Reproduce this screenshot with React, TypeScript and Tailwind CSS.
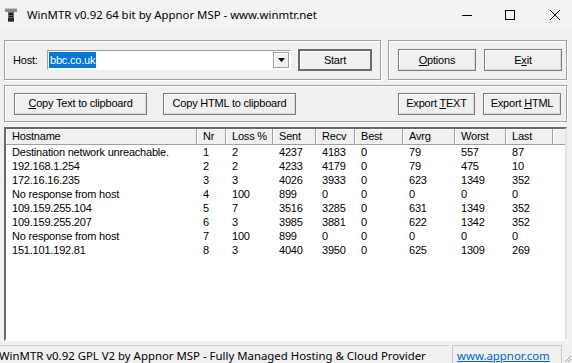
import React from 'react';

const dlg = "font-['Liberation_Sans',Arial,sans-serif] text-[11px] tracking-[-0.2px] text-black";
const ui = "font-['Noto_Sans',sans-serif] text-black";

const columns = [
  { name: 'Hostname', w: 'w-[191px]' },
  { name: 'Nr', w: 'w-[29px]' },
  { name: 'Loss %', w: 'w-[47px]' },
  { name: 'Sent', w: 'w-[43px]' },
  { name: 'Recv', w: 'w-[39px]' },
  { name: 'Best', w: 'w-[48px]' },
  { name: 'Avrg', w: 'w-[52px]' },
  { name: 'Worst', w: 'w-[51px]' },
  { name: 'Last', w: 'w-[47px]' },
];

const rows = [
  ['Destination network unreachable.', '1', '2', '4237', '4183', '0', '79', '557', '87'],
  ['192.168.1.254', '2', '2', '4233', '4179', '0', '79', '475', '10'],
  ['172.16.16.235', '3', '3', '4026', '3933', '0', '623', '1349', '352'],
  ['No response from host', '4', '100', '899', '0', '0', '0', '0', '0'],
  ['109.159.255.104', '5', '7', '3516', '3285', '0', '631', '1349', '352'],
  ['109.159.255.207', '6', '3', '3985', '3881', '0', '622', '1342', '352'],
  ['No response from host', '7', '100', '899', '0', '0', '0', '0', '0'],
  ['151.101.192.81', '8', '3', '4040', '3950', '0', '625', '1309', '269'],
];

function Btn({ children, className = '', isDefault = false }: { children: React.ReactNode; className?: string; isDefault?: boolean }) {
  return (
    <div
      className={
        'h-[22px] flex items-center justify-center bg-[#f0f0f0] ' +
        (isDefault
          ? 'border-2 border-[#6a6a6a] shadow-[inset_1px_1px_0_#fff]'
          : 'border border-[#7a7a7a] shadow-[inset_1px_1px_0_#fff,inset_-1px_-1px_0_#d8d8d8]') +
        ' ' + className
      }
    >
      <span className="whitespace-pre">{children}</span>
    </div>
  );
}

function Group({ children, className = '' }: { children: React.ReactNode; className?: string }) {
  return (
    <div className={'border border-[#a0a0a0] shadow-[inset_1px_1px_0_#fff,1px_1px_0_#fff] flex items-center ' + className}>
      {children}
    </div>
  );
}

function AppIcon() {
  return (
    <svg width="12" height="14" viewBox="0 0 12 14">
      <rect x="0" y="0" width="12" height="4" fill="#8a8a8a" />
      <rect x="0" y="0" width="12" height="1" fill="#c8c8c8" />
      <rect x="3" y="4" width="6" height="10" fill="#6a6a6a" />
      <rect x="4" y="5" width="4" height="2" fill="#1a1a1a" />
      <rect x="4" y="8" width="4" height="1" fill="#1a1a1a" />
      <rect x="3" y="10" width="6" height="3" fill="#2a2a2a" />
    </svg>
  );
}

export default function App() {
  return (
    <div className="w-[572px] h-[363px] bg-[#f0f0f0] flex flex-col overflow-hidden">
      {/* Title bar */}
      <div className={'h-[30px] flex items-center bg-[#f3f3f3] shrink-0 ' + ui}>
        <div className="ml-[5px] mt-[-1px]"><AppIcon /></div>
        <span className="ml-[10px] text-[11.4px] leading-none">WinMTR v0.92 64 bit by Appnor MSP - www.winmtr.net</span>
        <div className="ml-auto flex items-center mr-[12px]">
          <svg width="10" height="10" viewBox="0 0 10 10" className="mr-[33px]">
            <line x1="0" y1="5.5" x2="10" y2="5.5" stroke="#000" strokeWidth="1" />
          </svg>
          <svg width="10" height="10" viewBox="0 0 10 10" className="mr-[35px]">
            <rect x="0.5" y="0.5" width="9" height="9" fill="none" stroke="#000" strokeWidth="1" />
          </svg>
          <svg width="10" height="10" viewBox="0 0 10 10">
            <path d="M0 0 L10 10 M10 0 L0 10" stroke="#000" strokeWidth="1" />
          </svg>
        </div>
      </div>

      <div className={'flex flex-col px-[4px] ' + dlg}>
        {/* Row 1 */}
        <div className="flex mt-[10px] gap-[7px]">
          <Group className="w-[377px] h-[40px]">
            <span className="ml-[8px] w-[34px]">Host:</span>
            <div className="w-[244px] h-[20px] bg-white border border-t-[#a0a0a0] border-l-[#a0a0a0] border-b-white border-r-white flex items-center pl-[1px] pr-[1px]">
              <span className="bg-[#0078d7] text-white px-[1px] h-[16px] leading-[16px]">bbc.co.uk</span>
              <div className="ml-auto w-[16px] h-[16px] bg-[#f0f0f0] border border-[#a0a0a0] shadow-[inset_1px_1px_0_#fff] flex items-center justify-center">
                <svg width="7" height="4" viewBox="0 0 7 4"><path d="M0 0 H7 L3.5 4 Z" fill="#000" /></svg>
              </div>
            </div>
            <Btn isDefault className="ml-[7px] w-[74px]">Start</Btn>
          </Group>
          <Group className="w-[179px] h-[40px]">
            <Btn className="ml-[9px] w-[78px]"><span className="underline">O</span>ptions</Btn>
            <Btn className="ml-[8px] w-[78px]">E<span className="underline">x</span>it</Btn>
          </Group>
        </div>

        {/* Row 2 */}
        <Group className="mt-[5px] w-[563px] h-[37px]">
          <Btn className="ml-[9px] w-[133px]"><span className="underline">C</span>opy Text to clipboard</Btn>
          <Btn className="ml-[16px] w-[133px]">Copy HTML to clipboard</Btn>
          <Btn className="ml-auto w-[77px]">Export <span className="underline">T</span>EXT</Btn>
          <Btn className="ml-[8px] mr-[5px] w-[78px]">Export <span className="underline">H</span>TML</Btn>
        </Group>

        {/* List */}
        <div className="mt-[5px] w-[563px] h-[214px] border-2 border-t-[#696969] border-l-[#696969] border-b-white border-r-[#e3e3e3] bg-white flex flex-col">
          <div className="flex h-[16px] bg-[#f0f0f0] shrink-0">
            {columns.map(c => (
              <div key={c.name} className={c.w + ' h-full border-r border-b border-[#a0a0a0] shadow-[inset_1px_1px_0_#fff] pl-[6px] flex items-center'}>
                {c.name}
              </div>
            ))}
            <div className="flex-1 h-full border-b border-[#a0a0a0] shadow-[inset_1px_1px_0_#fff]" />
          </div>
          {rows.map((r, i) => (
            <div key={i} className="flex h-[14px] items-center">
              {r.map((v, j) => (
                <div key={j} className={columns[j].w + ' pl-[6px] whitespace-nowrap leading-[14px]'}>{v}</div>
              ))}
            </div>
          ))}
        </div>
      </div>

      {/* Status bar */}
      <div className={'mt-auto h-[18px] flex items-center ' + ui}>
        <div className="w-[449px] h-full border-t border-[#d0d0d0] flex items-center pt-[2px]">
          <span className="ml-[-1px] text-[11.4px]">WinMTR v0.92 GPL V2 by Appnor MSP - Fully Managed Hosting &amp; Cloud Provider</span>
        </div>
        <div className="ml-[3px] w-[110px] h-full border border-b-0 border-[#c8c8c8] flex items-center pt-[2px]">
          <span className="ml-[4px] text-[11.4px] text-[#0066cc] underline">www.appnor.com</span>
        </div>
        <svg width="10" height="10" viewBox="0 0 10 10" className="ml-auto self-end">
          <path d="M9 3 L3 9 M9 6 L6 9" stroke="#a0a0a0" strokeWidth="1" />
        </svg>
      </div>
    </div>
  );
}
